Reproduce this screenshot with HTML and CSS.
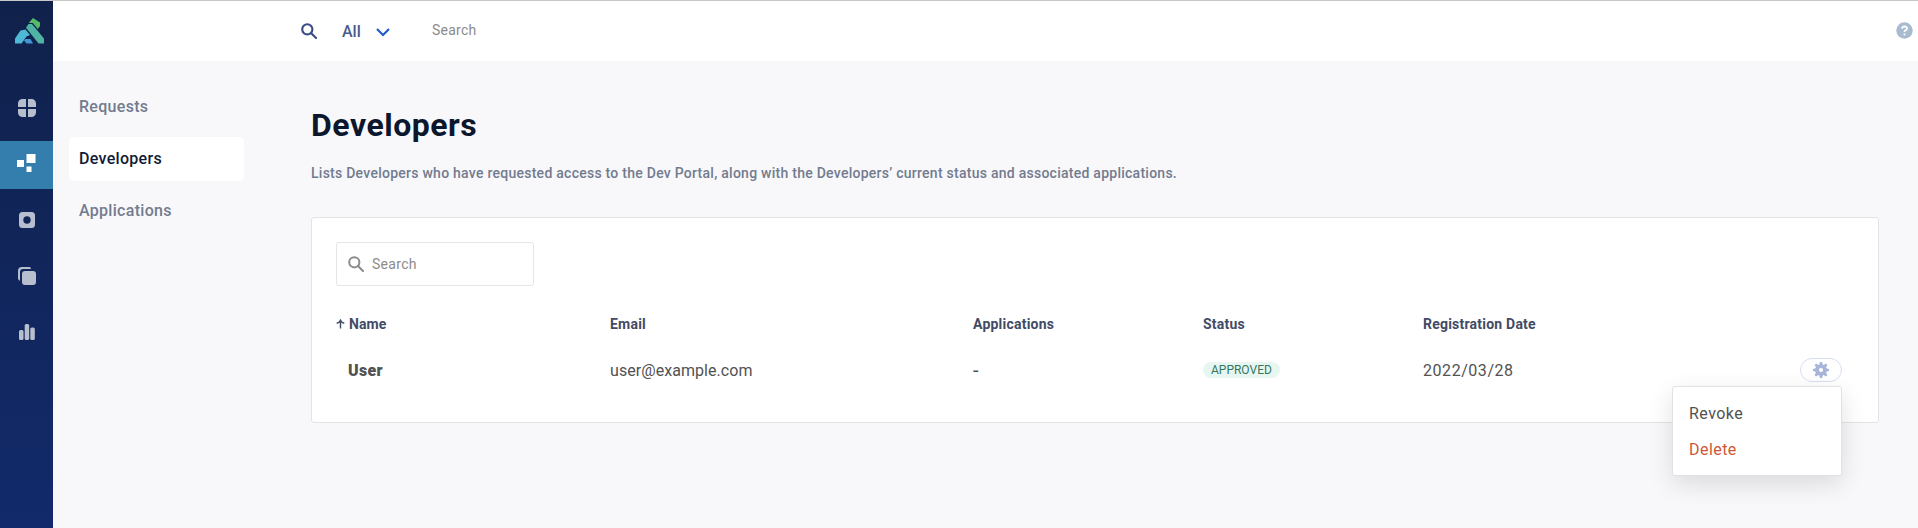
FILE: index.html
```html
<!DOCTYPE html>
<html lang="en">
<head>
<meta charset="utf-8">
<title>Developers</title>
<link rel="stylesheet" href="styles.css">
</head>
<body>
<div class="app">
  <nav class="rail">
    <a class="logo"><svg width="30" height="26" viewBox="0 0 30 26">
      <path fill="#53bd64" d="M14.300 4.200 18 0 25 4.500V8L22.800 11 17.800 5H14.300Z"/>
      <path fill="#4eb3a3" d="M13.500 6H17L29 20.500V25.500H23.500L11 9.800Z"/>
      <path fill="#4fb8d5" d="M5.500 12.500 10.500 11.500 15 17 11.500 18.500 6.500 25.500H0V20.500Z"/>
      <path fill="#4394d0" d="M10.500 21H15.500L18 25.500H11.500L9 22.500Z"/>
    </svg></a>
    <a class="rail-item"><svg width="18" height="18" viewBox="0 0 18 18"><path d="M8 0H4.500A4.500 4.500 0 0 0 0 4.500V8H8ZM10 0V8H18V4.500A4.500 4.500 0 0 0 13.500 0ZM0 10V13.500A4.500 4.500 0 0 0 4.500 18H8V10ZM10 10V18H13.500A4.500 4.500 0 0 0 18 13.500V10Z"/></svg></a>
    <a class="rail-item active"><svg width="19" height="18" viewBox="0 0 19 18"><path d="M9.500 0H18.500V9H9.500ZM0 6H7V13H0ZM9.500 12.500H14.500V18H9.500Z"/></svg></a>
    <a class="rail-item"><svg width="16" height="16" viewBox="0 0 16 16"><path fill-rule="evenodd" d="M3.500 0H12.500Q16 0 16 3.500V12.500Q16 16 12.500 16H3.500Q0 16 0 12.500V3.500Q0 0 3.500 0ZM8 4.300A3.700 3.700 0 1 0 8 11.700 3.700 3.700 0 1 0 8 4.300Z"/></svg></a>
    <a class="rail-item"><svg width="18" height="18" viewBox="0 0 18 18"><rect x="4" y="4" width="14" height="14" rx="3"/><path d="M13 1.500 12 0H4A4 4 0 0 0 0 4V12L2 14V5A3 3 0 0 1 5 2H13Z"/></svg></a>
    <a class="rail-item"><svg width="16" height="16" viewBox="0 0 16 16"><rect y="6" width="4.500" height="10" rx="1.500"/><rect x="5.700" width="4.500" height="16" rx="1.500"/><rect x="11.300" y="3.500" width="4.500" height="12.500" rx="1.500"/></svg></a>
  </nav>
  <div class="main">
    <header class="topbar">
      <svg class="top-search" width="16" height="16" viewBox="0 0 16 16"><circle cx="6.300" cy="6.300" r="5.100"/><path d="m10 10 5 5"/></svg>
      <span class="scope">All</span>
      <svg class="chevron" width="14" height="9" viewBox="0 0 14 9"><path d="m1 1 6 6 6-6"/></svg>
      <span class="top-placeholder">Search</span>
      <svg class="help" width="17" height="17" viewBox="0 0 17 17"><circle cx="8.500" cy="8.500" r="8.250"/><path d="M6 6.700Q6.200 4.500 8.500 4.500T11 6.500Q11 7.500 9.700 8.200T8.500 9.800M8.500 11.500V13.200"/></svg>
    </header>
    <div class="body">
      <aside class="side">
        <a class="side-item">Requests</a>
        <a class="side-item selected">Developers</a>
        <a class="side-item">Applications</a>
      </aside>
      <main class="content">
        <h1>Developers</h1>
        <p class="lead">Lists Developers who have requested access to the Dev Portal, along with the Developers’ current status and associated applications.</p>
        <section class="card">
          <div class="search"><svg width="16" height="16" viewBox="0 0 16 16"><circle cx="6.300" cy="6.300" r="5.100"/><path d="m10 10 5 5"/></svg><span>Search</span></div>
          <div class="row head">
            <span class="sort"><svg width="9" height="10" viewBox="0 0 9 10"><path d="M4.500 9.500V1.200M.7 4.200Q3.500 3.700 4.500 1.200 5.500 3.700 8.300 4.200"/></svg>Name</span>
            <span>Email</span><span>Applications</span><span>Status</span><span>Registration Date</span><span></span>
          </div>
          <div class="row data">
            <b class="user">User</b>
            <span class="email">user@example.com</span><span class="apps">-</span>
            <span class="status"><i class="badge">APPROVED</i></span>
            <span class="date">2022/03/28</span>
            <div class="actions">
              <button class="gear"><svg width="16" height="16" viewBox="-8 -8 16 16"><path d="M-1.700-5-1.100-8H1.100L1.700-5V5L1.100 8H-1.100L-1.700 5Z"/><path transform="rotate(45)" d="M-1.700-5-1.100-8H1.100L1.700-5V5L1.100 8H-1.100L-1.700 5Z"/><path transform="rotate(90)" d="M-1.700-5-1.100-8H1.100L1.700-5V5L1.100 8H-1.100L-1.700 5Z"/><path transform="rotate(135)" d="M-1.700-5-1.100-8H1.100L1.700-5V5L1.100 8H-1.100L-1.700 5Z"/><circle r="5.800"/><circle class="hub" r="2.100"/></svg></button>
              <div class="menu"><a>Revoke</a><a class="danger">Delete</a></div>
            </div>
          </div>
        </section>
      </main>
    </div>
  </div>
</div>
</body>
</html>
```
FILE: styles.css
```css
* { box-sizing: border-box; }
body { margin: 0; font-family: Roboto, "Liberation Sans", sans-serif; background: #f8f8fa; overflow: hidden; }
svg { display: block; flex: none; }
.app { display: flex; height: 528px; border-top: 1px solid #c8c8c8; }
.rail { width: 53px; flex: none; background: linear-gradient(#10214b, #122a6b); }
.logo { display: block; height: 79px; padding: 17px 0 0 15px; }
.rail-item { display: flex; align-items: center; justify-content: center; height: 48px; margin-bottom: 8px; padding-left: 1px; fill: #b7bece; }
.rail-item:nth-child(2) { margin-top: 3px; margin-bottom: 10px; padding-top: 1px; }
.rail-item.active { margin-bottom: 7px; padding: 0 0 4px; background: #337ead; fill: #fff; }
.main { flex: 1; min-width: 0; }
.topbar { display: flex; align-items: center; height: 60px; padding: 0 5px 0 248px; background: #fff; }
.top-search { fill: none; stroke: #3b4b85; stroke-width: 2.100; stroke-linecap: round; }
.scope { width: 18px; margin: 1px 0 0 25px; font-size: 16px; font-weight: 500; color: #495c8b; white-space: nowrap; }
.chevron { margin: 3px 0 0 16px; fill: none; stroke: #2459d2; stroke-width: 2.200; }
.top-placeholder { margin: 0 0 2px 42px; font-size: 14px; letter-spacing: .25px; color: #8b8b8b; }
.help { margin: 0 0 2px auto; fill: #a9bbce; }
.help path { fill: none; stroke: #fff; stroke-width: 1.800; }
.body { display: flex; }
.side { width: 191px; flex: none; padding: 24px 0 0 16px; }
.side-item { display: flex; align-items: center; height: 44px; margin-bottom: 8px; padding: 0 0 2px 10px; border-radius: 5px; font-size: 16px; font-weight: 500; letter-spacing: .3px; color: #737b8f; }
.side-item.selected { background: #fff; color: #111a36; }
.content { flex: 1; margin-left: 67px; padding: 44px 39px 0 0; }
h1 { margin: 0; font-size: 32px; line-height: 40px; font-weight: 700; letter-spacing: .5px; color: #0b172d; }
.lead { margin: 18px 0 0; font-size: 14px; line-height: 20px; font-weight: 500; letter-spacing: .257px; color: #737b8f; }
.card { height: 206px; margin-top: 34px; padding: 24px; background: #fff; border: 1px solid #e4e4e7; border-radius: 3px; }
.search { display: flex; align-items: center; width: 198px; height: 44px; padding-left: 11px; border: 1px solid #e4e5e8; border-radius: 3px; font-size: 14px; letter-spacing: .3px; color: #8b8b8b; }
.search svg { margin-right: 8px; fill: none; stroke: #8b8b8b; stroke-width: 2; stroke-linecap: round; }
.row { display: grid; grid-template-columns: 274px 363px 230px 220px 377px 1fr; align-items: center; }
.head { height: 28px; margin-top: 24px; font-size: 14px; font-weight: 700; letter-spacing: .22px; color: #424b65; }
.sort { display: flex; align-items: center; gap: 4px; letter-spacing: .1px; }
.sort svg { fill: none; stroke: #424b65; stroke-width: 1.400; }
.data { height: 40px; margin-top: 12px; font-size: 16px; color: #525252; }
.user { padding-left: 12px; font-weight: 900; letter-spacing: .3px; }
.email { letter-spacing: .06px; }
.apps { font-size: 20px; line-height: 20px; }
.date { letter-spacing: .55px; }
.badge { display: inline-block; height: 16px; padding: 0 8px; border-radius: 8px; font-size: 12px; line-height: 16px; font-style: normal; color: #32785f; background: #e8f6f2; }
.status { display: flex; }
.actions { position: relative; }
.gear { display: flex; align-items: center; justify-content: center; width: 42px; height: 24px; padding: 0; border: 1px solid #d6def0; border-radius: 12px; background: #fff; }
.gear svg { fill: #a7b5da; }
.gear .hub { fill: #fff; }
.menu { position: absolute; top: 28px; right: 12px; width: 170px; height: 90px; padding: 8px 16px; background: #fff; border: 1px solid #e2e2e4; border-radius: 3px; box-shadow: 0 8px 24px rgba(0,0,0,.12); }
.menu a { display: flex; align-items: center; height: 36px; letter-spacing: .45px; }
.menu .danger { color: #cc5837; }
```
